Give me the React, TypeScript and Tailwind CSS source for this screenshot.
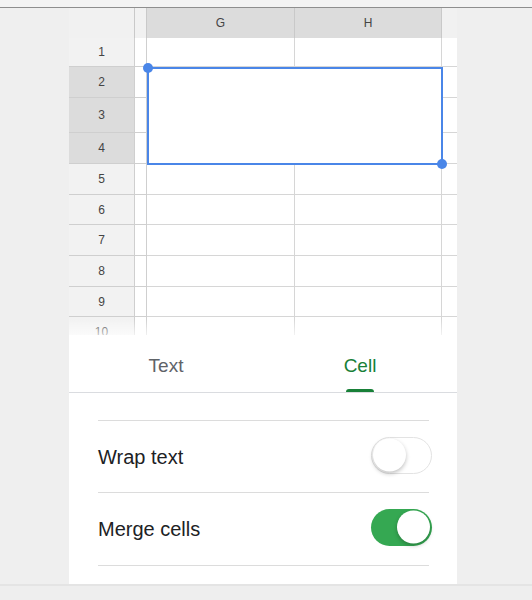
import { useState } from 'react';

// Row heights of the visible sheet rows (row 10 is cut by the bottom sheet)
const rows = [
    { n: 1, h: 29 },
    { n: 2, h: 31 },
    { n: 3, h: 35 },
    { n: 4, h: 31 },
    { n: 5, h: 31 },
    { n: 6, h: 30 },
    { n: 7, h: 31 },
    { n: 8, h: 31 },
    { n: 9, h: 30 },
    { n: 10, h: 30 },
];

const selectedRows = [2, 3, 4];

function Toggle({ on, onChange }: { on: boolean; onChange: () => void }) {
    return (
        <button
            onClick={onChange}
            className={`relative h-[37px] w-[61px] rounded-full transition-colors ${
                on ? 'bg-[#35a852]' : 'border border-[#e3e3e3] bg-white'
            }`}
        >
            <span
                className={`absolute top-1/2 h-[33px] w-[33px] -translate-y-1/2 rounded-full bg-white shadow-[0_2px_4px_rgba(0,0,0,0.25)] transition-all ${
                    on ? 'right-[2px]' : 'left-[1px]'
                }`}
            />
        </button>
    );
}

export default function App() {
    const [tab, setTab] = useState<'text' | 'cell'>('cell');
    const [wrap, setWrap] = useState(false);
    const [merge, setMerge] = useState(true);

    return (
        <div className="flex h-[600px] w-[532px] flex-col overflow-hidden bg-[#efefef] font-['Liberation_Sans',Arial,sans-serif]">
            {/* status strip */}
            <div className="h-[7px] bg-[#f3f3f3]" />
            <div className="h-px bg-[#8e8e8e]" />

            <div className="ml-[69px] flex w-[388px] flex-col">
                {/* sheet grid */}
                <div className="relative h-[327px] overflow-hidden">
                    {/* column headers */}
                    <div className="flex h-[30px] text-[12px] text-[#444]">
                        <div className="w-[66px] border-r border-[#c9c9c9] bg-[#f1f1f1]" />
                        <div className="w-[12px] border-r border-[#c9c9c9] bg-[#f1f1f1]" />
                        <div className="flex w-[148px] items-center justify-center border-r border-[#c9c9c9] bg-[#dcdcdc]">G</div>
                        <div className="flex w-[147px] items-center justify-center border-r border-[#c9c9c9] bg-[#dcdcdc]">H</div>
                        <div className="w-[15px] bg-[#f1f1f1]" />
                    </div>

                    {rows.map((row) => {
                        const sel = selectedRows.includes(row.n);
                        return (
                            <div key={row.n} className="flex" style={{ height: row.h }}>
                                <div
                                    className={`flex w-[66px] items-center justify-center border-r border-b border-[#cfcfcf] text-[12px] text-[#444] ${
                                        sel ? 'bg-[#dcdcdc]' : 'bg-[#f2f2f2]'
                                    }`}
                                >
                                    {row.n}
                                </div>
                                <div className="w-[12px] border-r border-b border-[#cfcfcf] bg-white" />
                                <div className="w-[148px] border-r border-b border-[#d6d6d6] bg-white" />
                                <div className="w-[147px] border-r border-b border-[#d6d6d6] bg-white" />
                                <div className="w-[15px] border-b border-[#d6d6d6] bg-white" />
                            </div>
                        );
                    })}

                    {/* fade where rows slide under the sheet */}
                    <div className="pointer-events-none absolute right-0 bottom-0 left-0 h-[16px] bg-gradient-to-b from-white/0 to-white/70" />

                    {/* merged range G2:H4 */}
                    <div className="absolute top-[59px] left-[78px] h-[98px] w-[296px] border-2 border-[#4a86e8] bg-white">
                        <span className="absolute -top-[6px] -left-[6px] h-[10px] w-[10px] rounded-full bg-[#4a86e8]" />
                        <span className="absolute -right-[6px] -bottom-[6px] h-[10px] w-[10px] rounded-full bg-[#4a86e8]" />
                    </div>
                </div>

                {/* format bottom sheet */}
                <div className="flex h-[249px] flex-col bg-white">
                    <div className="flex h-[58px] border-b border-[#dadce0] text-[19px]">
                        <button
                            onClick={() => setTab('text')}
                            className={`relative flex flex-1 items-center justify-center pt-[5px] ${tab === 'text' ? 'text-[#188038]' : 'text-[#5f6368]'}`}
                        >
                            Text
                            {tab === 'text' && <span className="absolute bottom-0 h-[3px] w-[28px] rounded-t-[3px] bg-[#188038]" />}
                        </button>
                        <button
                            onClick={() => setTab('cell')}
                            className={`relative flex flex-1 items-center justify-center pt-[5px] ${tab === 'cell' ? 'text-[#188038]' : 'text-[#5f6368]'}`}
                        >
                            Cell
                            {tab === 'cell' && <span className="absolute bottom-0 h-[3px] w-[28px] rounded-t-[3px] bg-[#188038]" />}
                        </button>
                    </div>

                    <div className="mt-[27px] ml-[29px] w-[331px] border-t border-[#dcdcdc]">
                        <div className="flex h-[72px] items-center justify-between border-b border-[#dcdcdc]">
                            <span className="text-[20px] text-[#202124]">Wrap text</span>
                            <div className="-mr-[3px] mt-[3px]">
                                <Toggle on={wrap} onChange={() => setWrap(!wrap)} />
                            </div>
                        </div>
                        <div className="flex h-[73px] items-center justify-between border-b border-[#dcdcdc]">
                            <span className="text-[20px] text-[#202124]">Merge cells</span>
                            <div className="-mr-[3px] mt-[3px]">
                                <Toggle on={merge} onChange={() => setMerge(!merge)} />
                            </div>
                        </div>
                    </div>
                </div>
            </div>

            <div className="h-[2px] bg-[#e4e4e4]" />
            <div className="flex-1 bg-[#eeeeee]" />
        </div>
    );
}
